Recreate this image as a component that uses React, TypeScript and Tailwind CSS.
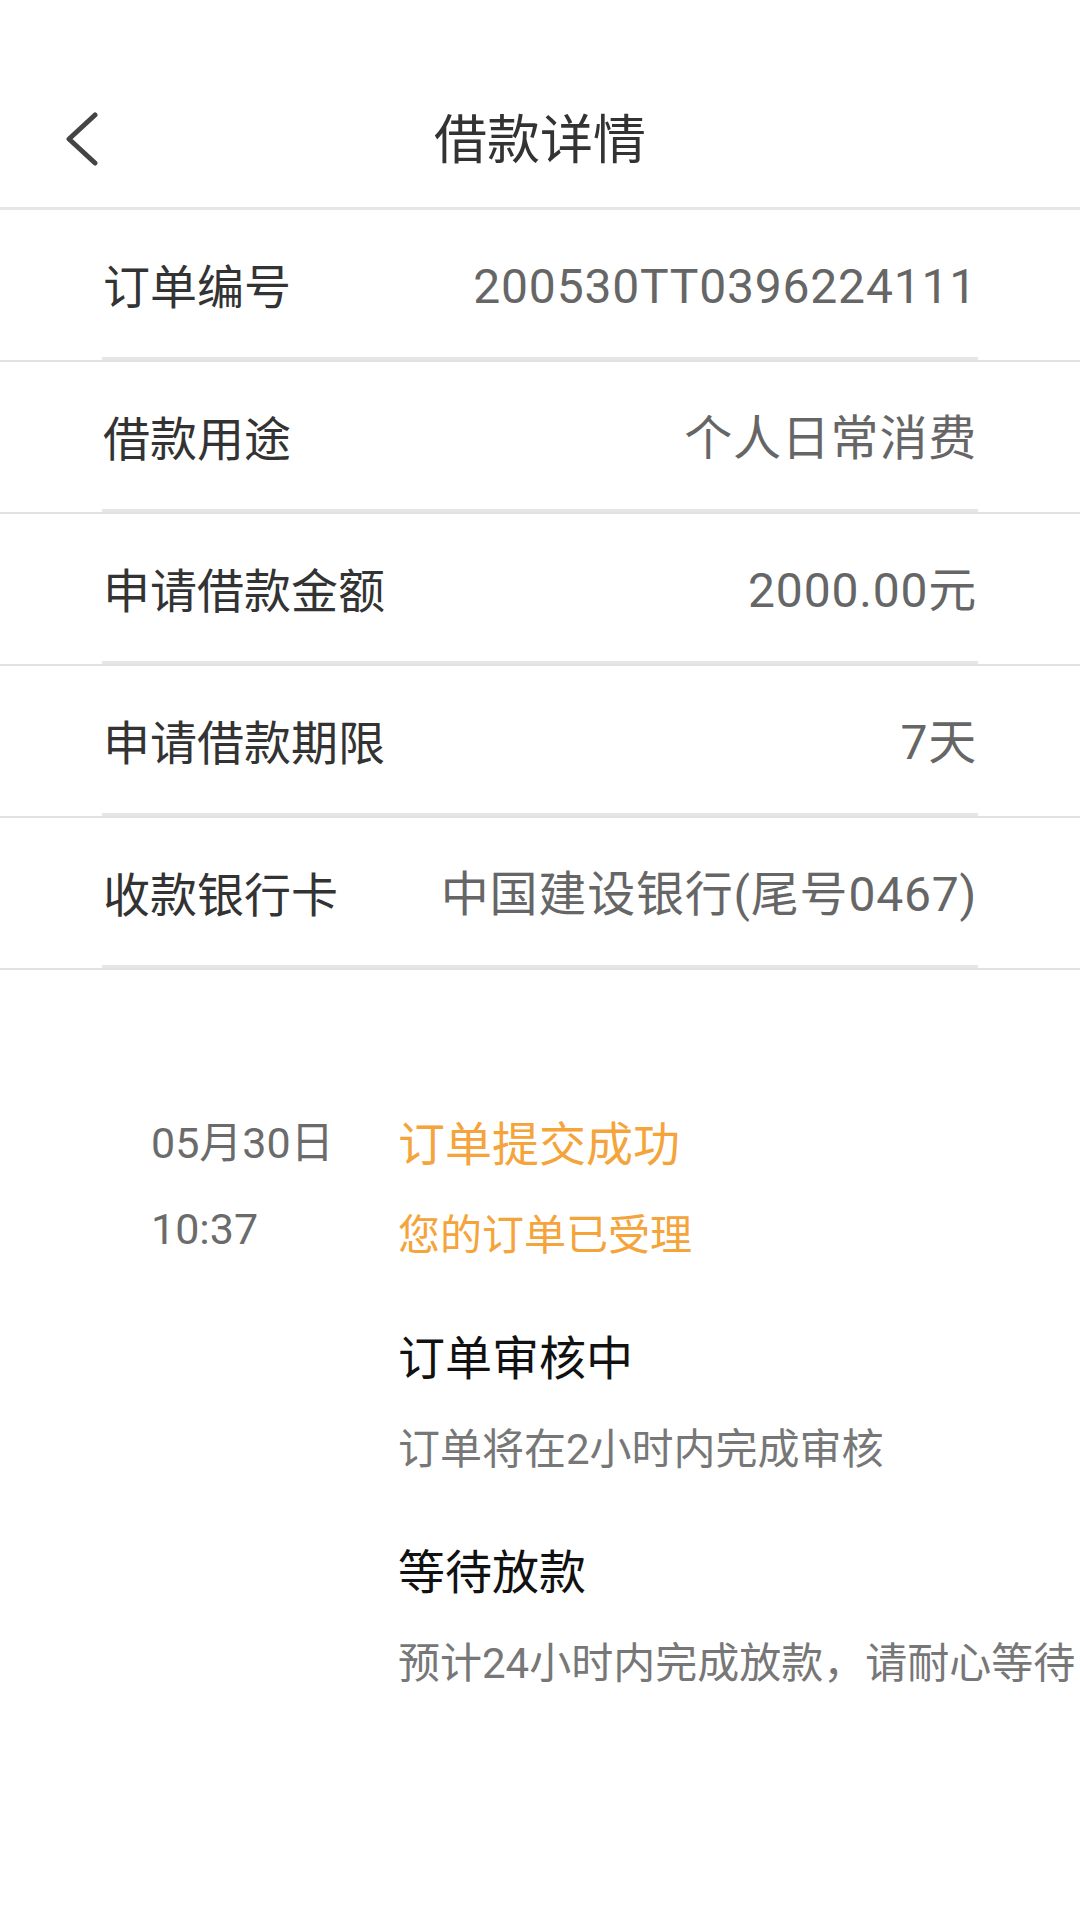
import React from 'react';

const font = { fontFamily: 'Roboto, "Noto Sans CJK SC", sans-serif' };

const rows = [
  { label: '订单编号', value: '200530TT0396224111' },
  { label: '借款用途', value: '个人日常消费' },
  { label: '申请借款金额', value: '2000.00元' },
  { label: '申请借款期限', value: '7天' },
  { label: '收款银行卡', value: '中国建设银行(尾号0467)' },
];

const steps = [
  { title: '订单提交成功', desc: '您的订单已受理', active: true },
  { title: '订单审核中', desc: '订单将在2小时内完成审核', active: false },
  { title: '等待放款', desc: '预计24小时内完成放款，请耐心等待', active: false },
];

const BackIcon = () => (
  <svg width="40" height="56" viewBox="0 0 40 56" fill="none">
    <polyline
      points="31,3 5,27 31,51"
      stroke="#444444"
      strokeWidth="5"
      strokeLinecap="round"
      strokeLinejoin="round"
    />
  </svg>
);

const InfoRow = ({ label, value }: { label: string; value: string }) => (
  <div>
    <div className="flex h-[147px] items-center justify-between px-[103px] pt-[7px]">
      <span className="text-[47px] leading-none text-[#333333]">{label}</span>
      <span className="text-[48px] leading-none tracking-[0.8px] text-[#666666]">{value}</span>
    </div>
    <div className="mx-[102px] h-[3px] bg-[#e6e6e6]" />
    <div className="h-[2px] bg-[#e2e2e2]" />
  </div>
);

export default function App() {
  return (
    <div className="min-h-[1920px] w-[1080px] overflow-hidden bg-white" style={font}>
      <header className="pt-[69px]">
        <div className="grid h-[138px] grid-cols-[1fr_auto_1fr] items-center">
          <div className="pl-[64px] pt-[3px]">
            <BackIcon />
          </div>
          <h1 className="pt-[7px] text-[53px] font-normal leading-none text-[#333333]">借款详情</h1>
          <div />
        </div>
        <div className="h-[3px] bg-[#e6e6e6]" />
      </header>

      <section>
        {rows.map((r) => (
          <InfoRow key={r.label} label={r.label} value={r.value} />
        ))}
      </section>

      <section className="flex pt-[143px] pl-[151px]">
        <div className="w-[247px] text-[43px] leading-[56px] text-[#6b6b6b]">
          <div className="pt-[2px]">05月30日</div>
          <div className="mt-[30px]">10:37</div>
        </div>
        <div className="flex flex-col gap-[63px] whitespace-nowrap">
          {steps.map((s) => (
            <div key={s.title}>
              <div
                className={
                  s.active
                    ? 'text-[47px] leading-[64px] text-[#f4a43a]'
                    : 'text-[47px] leading-[64px] text-[#111111]'
                }
              >
                {s.title}
              </div>
              <div
                className={
                  s.active
                    ? 'mt-[31px] text-[42px] leading-[56px] text-[#f4a43a]'
                    : 'mt-[31px] text-[42px] leading-[56px] text-[#777777]'
                }
              >
                {s.desc}
              </div>
            </div>
          ))}
        </div>
      </section>
    </div>
  );
}
